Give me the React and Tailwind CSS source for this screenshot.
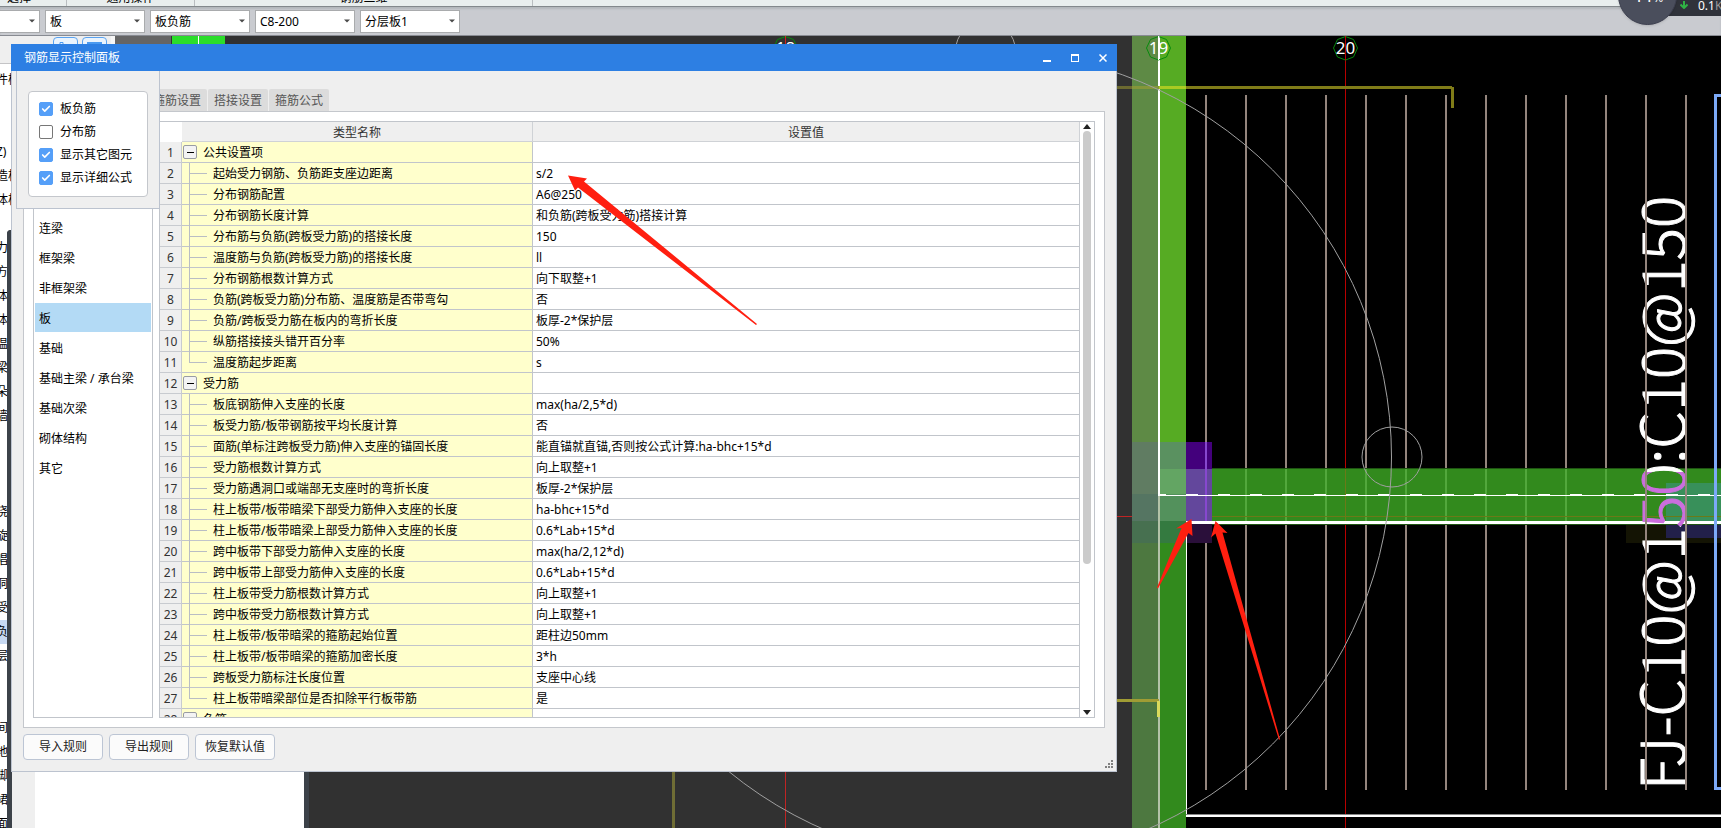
import React, { useState } from 'react';
import { Check } from 'lucide-react';

const toolbarSelects = ['板', '板负筋', 'C8-200', '分层板1'];

const memberTypes = ['连梁', '框架梁', '非框架梁', '板', '基础', '基础主梁 / 承台梁', '基础次梁', '砌体结构', '其它'];

const displayOptions = [
  { label: '板负筋', checked: true },
  { label: '分布筋', checked: false },
  { label: '显示其它图元', checked: true },
  { label: '显示详细公式', checked: true }
];

const treeRows = [
  '件楼', '', '', 'Z)', '造柱', '体柱', '', '力', '方', '体', '体', '温', '梁', '朵', '墙', '', '', '',
  '浇', '旋', '唱', '洞', '受', '负', '层', '', '', '间', '地', '脚', '裙', '面'
];

const rules = [
  { group: true, name: '公共设置项' },
  { name: '起始受力钢筋、负筋距支座边距离', value: 's/2' },
  { name: '分布钢筋配置', value: 'A6@250' },
  { name: '分布钢筋长度计算', value: '和负筋(跨板受力筋)搭接计算' },
  { name: '分布筋与负筋(跨板受力筋)的搭接长度', value: '150' },
  { name: '温度筋与负筋(跨板受力筋)的搭接长度', value: 'll' },
  { name: '分布钢筋根数计算方式', value: '向下取整+1' },
  { name: '负筋(跨板受力筋)分布筋、温度筋是否带弯勾', value: '否' },
  { name: '负筋/跨板受力筋在板内的弯折长度', value: '板厚-2*保护层' },
  { name: '纵筋搭接接头错开百分率', value: '50%' },
  { name: '温度筋起步距离', value: 's', last: true },
  { group: true, name: '受力筋' },
  { name: '板底钢筋伸入支座的长度', value: 'max(ha/2,5*d)' },
  { name: '板受力筋/板带钢筋按平均长度计算', value: '否' },
  { name: '面筋(单标注跨板受力筋)伸入支座的锚固长度', value: '能直锚就直锚,否则按公式计算:ha-bhc+15*d' },
  { name: '受力筋根数计算方式', value: '向上取整+1' },
  { name: '受力筋遇洞口或端部无支座时的弯折长度', value: '板厚-2*保护层' },
  { name: '柱上板带/板带暗梁下部受力筋伸入支座的长度', value: 'ha-bhc+15*d' },
  { name: '柱上板带/板带暗梁上部受力筋伸入支座的长度', value: '0.6*Lab+15*d' },
  { name: '跨中板带下部受力筋伸入支座的长度', value: 'max(ha/2,12*d)' },
  { name: '跨中板带上部受力筋伸入支座的长度', value: '0.6*Lab+15*d' },
  { name: '柱上板带受力筋根数计算方式', value: '向上取整+1' },
  { name: '跨中板带受力筋根数计算方式', value: '向上取整+1' },
  { name: '柱上板带/板带暗梁的箍筋起始位置', value: '距柱边50mm' },
  { name: '柱上板带/板带暗梁的箍筋加密长度', value: '3*h' },
  { name: '跨板受力筋标注长度位置', value: '支座中心线' },
  { name: '柱上板带暗梁部位是否扣除平行板带筋', value: '是', last: true },
  { group: true, name: '负筋' }
];

const rebarX = [1206, 1246, 1286, 1326, 1366, 1406, 1446, 1486, 1526, 1566, 1606, 1646, 1686];

const Ribbon = () => (
  <div className="relative z-10 flex h-[7px] shrink-0 items-end overflow-hidden border-b border-[#83888c] bg-[#e9eeee] leading-[14px]">
    <div className="flex h-full w-[67px] items-end justify-center border-r border-[#b9bdc0] pr-7 pb-px">选择</div>
    <div className="flex h-full w-32 items-end justify-center border-r border-[#b9bdc0] pb-px">通用操作</div>
    <div className="flex h-full w-[338px] items-end justify-center border-r border-[#b9bdc0] pb-px">钢筋三维</div>
  </div>
);

const ToolbarSelect = ({ label, value }) => (
  <div className="grid w-[100px] shrink-0 items-center">
    <select
      aria-label={label}
      className="col-start-1 row-start-1 h-[23px] w-full appearance-none border border-[#a9abad] bg-white pt-px pl-1 text-black"
    >
      <option>{value}</option>
    </select>
    <svg className="pointer-events-none col-start-1 row-start-1 mr-[5px] justify-self-end" width="6" height="4" viewBox="0 0 6 4">
      <path d="M0 0.5h6L3 3.5z" fill="#4a4a4a" />
    </svg>
  </div>
);

const Toolbar = () => (
  <div className="flex h-[29px] shrink-0 items-center gap-[5px] overflow-hidden border-b border-[#888b92] bg-[#c9cbd0] shadow-[inset_0_2px_2px_#b4b7bb]">
    <div className="-ml-[60px]">
      <ToolbarSelect label="楼层" value="" />
    </div>
    {toolbarSelects.map((value) => (
      <ToolbarSelect key={value} label={value} value={value} />
    ))}
  </div>
);

const MemberTree = () => (
  <aside className="flex w-[115px] shrink-0 flex-col overflow-hidden border-r-4 border-[#f6f6f6] bg-white">
    <div className="flex h-7 shrink-0 justify-end gap-1 border-b border-[#c4c4c6] bg-[#efefef] pt-px pr-1">
      <button aria-label="列表" className="flex h-6 w-[25px] justify-center rounded border border-[#5aa3f0] bg-[#eaf4fe] pt-1">
        <svg width="14" height="12" viewBox="0 0 14 12" fill="none" stroke="#4a9af0">
          <path d="M1 0.5h3v10H1zM6 2.5h7M6 6.5h7" />
        </svg>
      </button>
      <button aria-label="图标" className="flex h-6 w-[25px] justify-center rounded border border-[#5aa3f0] bg-[#eaf4fe] pt-1">
        <svg width="15" height="12" viewBox="0 0 15 12">
          <path d="M0 0h15v12H0z" fill="#4a9af0" />
        </svg>
      </button>
    </div>
    <ul className="-ml-1 pt-1">
      {treeRows.map((text, index) => (
        <li key={index} className={`h-6 leading-6 whitespace-nowrap ${text === '负' ? 'bg-[#c7d9f2]' : ''}`}>
          {text}
        </li>
      ))}
    </ul>
  </aside>
);

const AxisBubble = ({ x, label, line }) => (
  <g>
    <path d={`M${x} 36.5l8 3 4 8.500-4 9-8 3-8-3-4-9 4-8.500z`} fill="none" stroke="#078a0c" />
    <text x={x} y="54" textAnchor="middle" fontSize="17" fill="#fff">{label}</text>
    <path d={`M${x} 36v24`} stroke={line} />
  </g>
);

const PlanCanvas = () => (
  <div className="relative min-w-0 flex-1 overflow-hidden bg-black">
    <svg className="absolute inset-0 h-full w-full" aria-label="平面图">
      <defs>
        {/* the label turns violet where it crosses the beam */}
        <linearGradient id="labelFill" gradientUnits="userSpaceOnUse" x1="0" y1="0" x2="600" y2="0">
          <stop offset="0.44" stopColor="#fff" />
          <stop offset="0.44" stopColor="#cb6ede" />
          <stop offset="0.53" stopColor="#cb6ede" />
          <stop offset="0.53" stopColor="#fff" />
        </linearGradient>
      </defs>
      <g transform="translate(-115 -36)">
        <rect x="115" y="36" width="1017" height="3000" fill="#313131" />
        <rect x="115" y="36" width="56" height="200" fill="#656565" />
        <rect x="172" y="36" width="53" height="200" fill="#2bdd2b" />
        <path d="M198.5 36v200" stroke="#fff" />

        {/* column strip */}
        <rect x="1132" y="36" width="27" height="485" fill="#5e8a45" />
        <rect x="1159" y="36" width="27" height="485" fill="#56ab23" />
        <rect x="1132" y="521" width="27" height="3000" fill="#4d7840" />
        <rect x="1159" y="521" width="27" height="3000" fill="#328a1d" />

        {/* grid lines */}
        <path d="M785.500 36v3000M1117 516.500h15" stroke="#c02424" />
        <path d="M1345.500 36v3000" stroke="#b80000" />

        {rebarX.map((x) => (
          <path key={x} d={`M${x} 95v695`} stroke="#94857d" strokeWidth="2" />
        ))}

        {/* beam */}
        <rect x="1626" y="524" width="3000" height="19" fill="#141404" />
        <rect x="1666" y="524" width="3000" height="14" fill="#22204a" />
        <rect x="1186" y="468" width="3000" height="57" fill="#1f5512" />
        <rect x="1186" y="469" width="3000" height="53" fill="#328a1d" />
        <rect x="1666" y="483" width="3000" height="38" fill="#38905a" />
        {rebarX.map((x) => (
          <path key={x} d={`M${x} 469v53`} stroke="#52a83c" strokeWidth="2" />
        ))}
        <path d="M1212 516.500h3000M1345.500 469v53" stroke="#6b7a18" />

        {/* column section */}
        <rect x="1132" y="442" width="27" height="52" fill="#607c62" />
        <rect x="1159" y="442" width="27" height="27" fill="#5a9160" />
        <rect x="1159" y="469" width="27" height="25" fill="#63a563" />
        <rect x="1132" y="494" width="27" height="27" fill="#557562" />
        <rect x="1159" y="494" width="27" height="27" fill="#53915c" />
        <rect x="1132" y="521" width="27" height="22" fill="#477050" />
        <rect x="1159" y="521" width="27" height="22" fill="#347a40" />
        <rect x="1186" y="442" width="26" height="27" fill="#43007c" />
        <rect x="1186" y="469" width="26" height="52" fill="#63479c" />
        <rect x="1186" y="521" width="26" height="22" fill="#2a0f3a" />
        <path d="M1206 442v79" stroke="#8748cf" strokeWidth="2" />

        {/* slab outlines */}
        <path d="M1159 36v459" stroke="#fff" strokeWidth="2" />
        <path d="M1159 496v3000" stroke="#b3c2a8" strokeWidth="2" />
        <path d="M1158 495.500h3000" stroke="#fff" />
        <path d="M1158 494.500h3000" stroke="#fff" strokeDasharray="12 20" strokeDashoffset="4" />
        <path d="M1186 522.500h3000" stroke="#fff" strokeWidth="3" />
        <path d="M1186.500 522v292" stroke="#fff" />
        <path d="M1186 814.500h3000" stroke="#888" />
        <path d="M1186 816h3000" stroke="#fff" strokeWidth="2" />

        {/* hooked bars */}
        <path d="M1117 87.500h15" stroke="#6b6930" strokeWidth="3" />
        <path d="M1132 87.500h27" stroke="#84963a" strokeWidth="3" />
        <path d="M1159 87.500h27" stroke="#aacb22" strokeWidth="3" />
        <path d="M1186 87.500h266" stroke="#807c18" strokeWidth="3" />
        <path d="M1452.500 87v21" stroke="#807c18" strokeWidth="3" />
        <path d="M1117 700.500h42" stroke="#a09c34" strokeWidth="3" />
        <path d="M1158.500 701v16" stroke="#dada5c" strokeWidth="3" />
        <path d="M673.500 701v3000" stroke="#6f6d35" strokeWidth="3" />

        {/* orbit control */}
        <g fill="none" stroke="#a0a0a0">
          <circle cx="985.500" cy="457" r="406" />
          <circle cx="985.500" cy="51" r="30" />
          <circle cx="1392" cy="457" r="30" />
        </g>

        <AxisBubble x={785.5} label="18" line="#d02020" />
        <AxisBubble x={1158.5} label="19" line="#fff" />
        <AxisBubble x={1345.5} label="20" line="#b80000" />

        <text
          transform="translate(1685 790) rotate(-90)"
          fontSize="60"
          fill="url(#labelFill)"
          stroke="url(#labelFill)"
          className="font-['Noto_Sans_CJK_SC',sans-serif] font-light"
        >
          FJ-C10@150:C10@150
        </text>
        <path d="M1646 190v600M1686 190v600" stroke="#94857d" strokeWidth="2" />
        <path d="M4000 95.500H1715.500V788.500h3000" fill="none" stroke="#7ca9f7" strokeWidth="3" />
      </g>
    </svg>
  </div>
);

const OptionsPopup = () => (
  <div className="absolute top-0 left-1 h-[138px] w-36 border border-t-0 border-[#bcc3cf] bg-[#efefef] px-[11px] pt-5">
    <div className="rounded border border-[#c4c7cc] bg-white pt-[5px] pb-[7px] pl-[10px]">
      {displayOptions.map((option) => (
        <label key={option.label} className="flex h-[23px] items-center gap-[7px] text-black">
          <span className="grid shrink-0">
            <input
              type="checkbox"
              defaultChecked={option.checked}
              className="peer col-start-1 row-start-1 size-[14px] appearance-none rounded-xs border border-[#777] bg-white checked:border-[#559ff8] checked:bg-[#559ff8]"
            />
            <Check
              size={10}
              strokeWidth={4}
              className="pointer-events-none invisible col-start-1 row-start-1 self-center justify-self-center text-white peer-checked:visible"
            />
          </span>
          <span className="pt-px">{option.label}</span>
        </label>
      ))}
    </div>
  </div>
);

const RuleTable = () => (
  <div className="flex min-w-0 flex-1 overflow-hidden border border-[#c1c5cb]">
    <div className="min-w-0 flex-1 overflow-hidden">
      <table className="w-full table-fixed border-separate border-spacing-0">
        <thead>
          <tr className="h-5 text-[#333]">
            <th className="w-[22px] p-0 font-normal" aria-label="序号"></th>
            <th className="w-[351px] border-r border-b border-[#cfd2d6] bg-[#efefef] p-0 pt-[2px] font-normal">类型名称</th>
            <th className="border-r border-b border-[#cfd2d6] bg-[#efefef] p-0 pt-[2px] font-normal">设置值</th>
          </tr>
        </thead>
        <tbody>
          {rules.map((rule, index) => (
            <tr key={index} className="h-[21px] text-black">
              <td className="border-r border-b border-[#c8cbd0] bg-[#efefef] p-0 pt-[2px] text-center text-[#333]">{index + 1}</td>
              <td className="border-r border-b border-[#c1c5cb] bg-[#ffffcc] p-0">
                <div className="flex h-5 items-center whitespace-nowrap">
                  {rule.group ? (
                    <button
                      aria-label="折叠"
                      className="mr-[6px] ml-px flex size-[14px] items-center justify-center rounded-xs border border-[#999ca3] bg-[#f3f3f3]"
                    >
                      <span className="h-px w-[7px] bg-black"></span>
                    </button>
                  ) : (
                    <svg className="mr-[5px] ml-[7px] shrink-0 overflow-visible" width="19" height="21" fill="none" stroke="#b9bdc4">
                      <path d={rule.last ? 'M0.500 0v10.500M0 10.500h18' : 'M0.500 0v21M0 10.500h18'} />
                    </svg>
                  )}
                  <span className="pt-[2px]">{rule.name}</span>
                </div>
              </td>
              <td className="border-r border-b border-[#c1c5cb] bg-white pt-[2px] pr-0 pb-0 pl-[3px]">{rule.value}</td>
            </tr>
          ))}
        </tbody>
      </table>
    </div>
    <div className="flex w-[14px] shrink-0 flex-col items-center py-[2px]">
      <svg width="8" height="5" viewBox="0 0 8 5">
        <path d="M4 0l4 5H0z" fill="#222" />
      </svg>
      <div className="flex min-h-0 w-2 flex-1 flex-col py-[2px]">
        <div className="h-3/4 rounded-full bg-[#cbcbcb]"></div>
      </div>
      <svg width="8" height="5" viewBox="0 0 8 5">
        <path d="M0 0h8L4 5z" fill="#222" />
      </svg>
    </div>
  </div>
);

const RebarDialog = () => {
  const [current, setCurrent] = useState('板');

  return (
    <section
      aria-label="钢筋显示控制面板"
      className="absolute top-11 right-[604px] bottom-14 left-[11px] flex min-w-[600px] flex-col bg-[#efefef]"
    >
      <header className="flex h-[27px] shrink-0 items-center justify-between bg-[#2d7fe3] pr-[10px] pl-[13px] text-white">
        <h1 className="pt-px">钢筋显示控制面板</h1>
        <div className="flex gap-5">
          <button aria-label="最小化">
            <svg width="8" height="8" viewBox="0 0 8 8"><path d="M0 6h8v2H0z" fill="#fff" /></svg>
          </button>
          <button aria-label="最大化">
            <svg width="8" height="8" viewBox="0 0 8 8"><path d="M0 0h8v8H0zM1 2v5h6V2z" fill="#fff" fillRule="evenodd" /></svg>
          </button>
          <button aria-label="关闭">
            <svg width="8" height="8" viewBox="0 0 8 8"><path d="M0.500 0.500l7 7M7.500 0.500l-7 7" stroke="#fff" strokeWidth="1.500" /></svg>
          </button>
        </div>
      </header>

      <div className="relative flex min-h-0 flex-1 flex-col border border-t-0 border-[#bcc3cf] px-[11px] pt-[18px] pb-[11px]">
        <nav className="flex h-[22px] shrink-0 gap-px pl-[124px] text-[#555]">
          {['箍筋设置', '搭接设置', '箍筋公式'].map((tab) => (
            <button key={tab} className="w-[60px] rounded-t-xs bg-[#dcdcdc] pt-[2px]">{tab}</button>
          ))}
        </nav>

        <div className="flex min-h-0 flex-1 gap-[6px] border border-[#c4c7cc] bg-white p-[9px]">
          <ul className="w-[120px] shrink-0 overflow-hidden border border-[#c1c5cb] px-px pt-[91px]">
            {memberTypes.map((type) => (
              <li key={type} className="pb-px">
                <button
                  onClick={() => setCurrent(type)}
                  className={`h-[29px] w-full pt-[2px] pl-1 text-left text-black ${type === current ? 'bg-[#b3daf5]' : ''}`}
                >
                  {type}
                </button>
              </li>
            ))}
          </ul>
          <RuleTable />
        </div>

        <footer className="flex shrink-0 gap-[6px] pt-[6px]">
          {['导入规则', '导出规则', '恢复默认值'].map((label) => (
            <button key={label} className="h-[26px] w-20 rounded border border-[#bcc5d4] bg-[#fbfbfb] text-[#222]">{label}</button>
          ))}
        </footer>

        <OptionsPopup />
        <svg className="absolute right-[3px] bottom-[3px]" width="8" height="8" viewBox="0 0 8 8">
          <path d="M6 0h2v2H6zM3 3h2v2H3zM6 3h2v2H6zM0 6h2v2H0zM3 6h2v2H3zM6 6h2v2H6z" fill="#808080" />
        </svg>
      </div>
    </section>
  );
};

const NetworkBall = () => (
  <div className="absolute top-0 right-0 z-20 flex h-4 w-[103px] items-start justify-end">
    <div className="flex h-4 w-14 items-start gap-[10px] overflow-hidden bg-[#30333b] pl-[15px] leading-[12px] text-white">
      <svg className="mt-px shrink-0" width="8" height="8" viewBox="0 0 8 8" fill="none" stroke="#2fb344" strokeWidth="2">
        <path d="M4 0v7M0.500 3.500L4 7l3.500-3.500" />
      </svg>
      <span>0.1<span className="text-[#999]">K/s</span></span>
    </div>
    <div className="absolute -top-[34px] left-0 flex size-[59px] items-baseline justify-center gap-px rounded-full border border-[#3d4050] bg-[#4a4e5c] pt-4 text-lg leading-6 text-white shadow">
      44<span className="text-[12px]">%</span>
    </div>
  </div>
);

const Arrows = () => (
  <svg className="pointer-events-none absolute inset-0 h-full w-full" fill="#ff1f10" aria-hidden="true">
    <path d="M568 175.500L587 178.500L584 181.500L757 324L756 325L578 187.500L575 190.500z" />
    <path d="M1191.500 519L1192.500 536L1188.500 533L1158 588.500L1157 587.500L1181.500 528L1176 528.500z" />
    <path d="M1215.500 521L1227.500 533L1222.500 532.500L1280 739L1279 740L1215.500 533.500L1211 537.500z" />
  </svg>
);

const App = () => {
  return (
    <div className="relative flex h-screen flex-col overflow-hidden bg-[#313131] font-['Noto_Sans','Noto_Sans_CJK_SC',sans-serif] text-[12px] leading-4 text-black">
      <Ribbon />
      <Toolbar />
      <main className="flex min-h-0 flex-1">
        <MemberTree />
        <PlanCanvas />
      </main>

      {/* docked panel behind the dialog */}
      <div className="absolute top-[230px] bottom-0 left-[7px] w-[302px] rounded-t border-x-[5px] border-t-[5px] border-[#3c4249] bg-white">
        <div className="h-full w-[23px] bg-[#efefef]"></div>
      </div>

      <RebarDialog />
      <NetworkBall />
      <Arrows />
    </div>
  );
};

export default App;
